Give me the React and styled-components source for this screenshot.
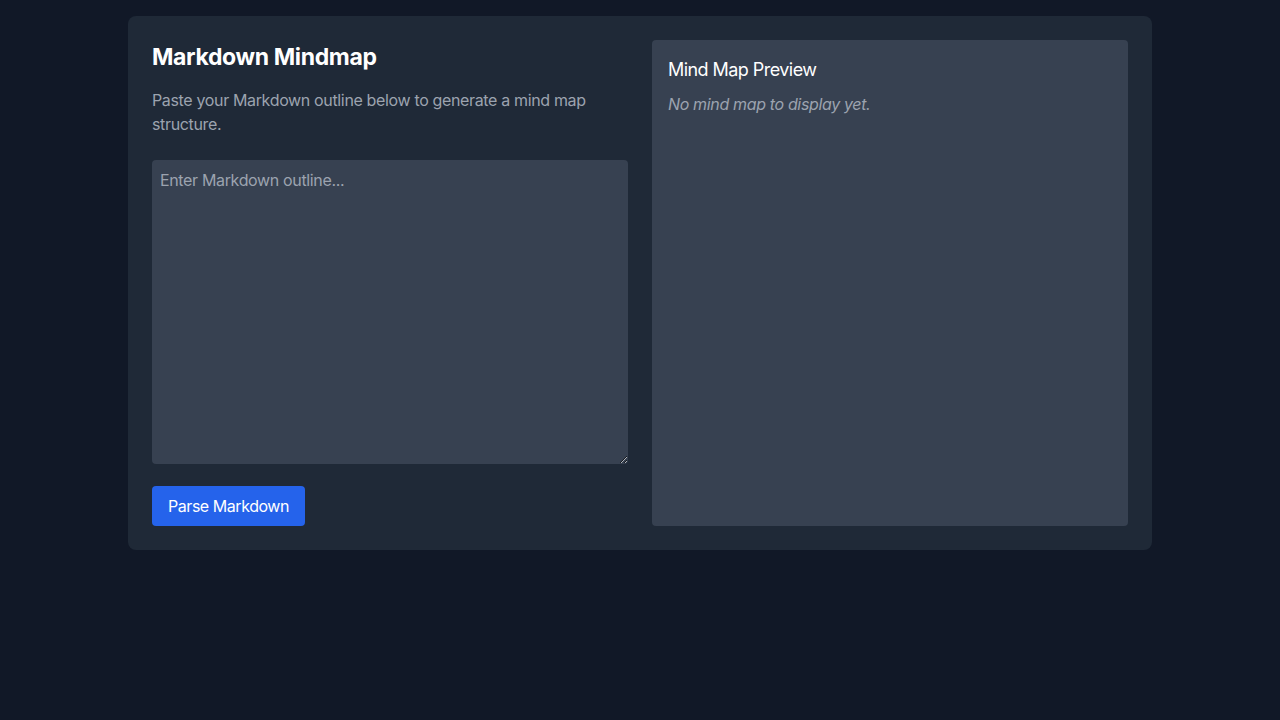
import React, { useState } from "react";
import styled, { createGlobalStyle } from "styled-components";

const Global = createGlobalStyle`
  html, body { margin: 0; padding: 0; background: #111827; }
  body { font-family: Inter, "Noto Sans", sans-serif; color: #fff; -webkit-font-smoothing: antialiased; }
  * { box-sizing: border-box; }
`;

const Page = styled.div`
  min-height: 720px;
  padding: 16px;
  background: #111827;
`;

const Card = styled.div`
  max-width: 1024px;
  margin: 0 auto;
  background: #1f2937;
  border-radius: 8px;
  padding: 24px;
  display: grid;
  grid-template-columns: 1fr 1fr;
  gap: 24px;
`;

const Column = styled.div`
  display: flex;
  flex-direction: column;
  align-items: flex-start;
`;

const Title = styled.h1`
  margin: 0 0 14px;
  font-size: 23px;
  line-height: 34px;
  font-weight: 700;
  letter-spacing: -0.35px;
  color: #fff;
`;

const Desc = styled.p`
  margin: 0 0 24px;
  font-size: 16px;
  line-height: 24px;
  letter-spacing: -0.35px;
  color: #9ca3af;
`;

const Input = styled.textarea`
  display: block;
  width: 100%;
  height: 304px;
  padding: 8px;
  border: none;
  border-radius: 4px;
  background: #374151;
  color: #fff;
  font-family: inherit;
  font-size: 16px;
  line-height: 24px;
  letter-spacing: -0.35px;
  resize: vertical;
  outline: none;
  margin: 0 0 22px;
  &::placeholder { color: #9ca3af; }
`;

const Button = styled.button`
  height: 40px;
  padding: 0 16px;
  border: none;
  border-radius: 4px;
  background: #2563eb;
  color: #fff;
  font-family: inherit;
  font-size: 16px;
  line-height: 24px;
  letter-spacing: -0.45px;
  cursor: pointer;
`;

const Preview = styled.div`
  background: #374151;
  border-radius: 4px;
  padding: 16px;
`;

const PreviewTitle = styled.h2`
  margin: 0 0 8px;
  font-size: 18px;
  line-height: 28px;
  font-weight: 400;
  letter-spacing: -0.55px;
  color: #fff;
`;

const Empty = styled.p`
  margin: 0;
  font-size: 16px;
  line-height: 24px;
  font-style: italic;
  letter-spacing: -0.35px;
  color: #9ca3af;
`;

export default function App() {
  const [text, setText] = useState("");
  return (
    <>
      <Global />
      <Page>
        <Card>
          <Column>
            <Title>Markdown Mindmap</Title>
            <Desc>Paste your Markdown outline below to generate a mind map structure.</Desc>
            <Input
              placeholder="Enter Markdown outline..."
              value={text}
              onChange={(e) => setText(e.target.value)}
            />
            <Button>Parse Markdown</Button>
          </Column>
          <Preview>
            <PreviewTitle>Mind Map Preview</PreviewTitle>
            <Empty>No mind map to display yet.</Empty>
          </Preview>
        </Card>
      </Page>
    </>
  );
}
